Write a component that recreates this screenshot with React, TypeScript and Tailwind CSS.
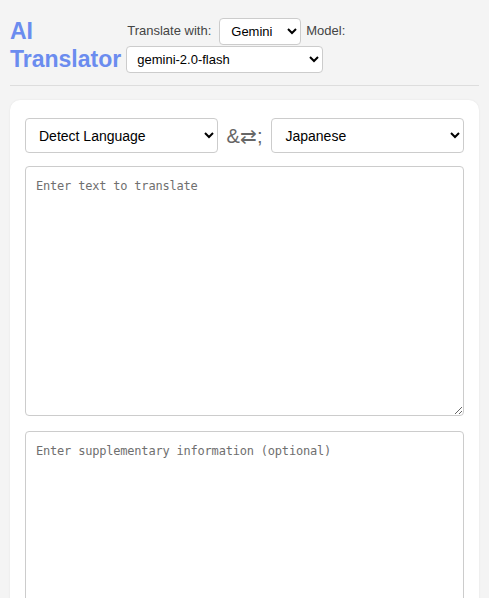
import React from "react";

export default function App() {
  return (
    <div
      className="min-h-[598px] bg-[#f4f4f4] px-[10px] text-[#333]"
      style={{ fontFamily: '"Liberation Sans", Arial, sans-serif' }}
    >
      <header className="flex items-center gap-[5px] border-b border-[#dddddd] pt-[17px] pb-[12px]">
        <h1 className="text-[23px] font-bold leading-[28px] text-[#6b8cef]">
          AI
          <br />
          Translator
        </h1>
        <div className="flex flex-wrap items-center w-[220px] gap-y-[1px]">
          <span className="text-[13px] text-[#444] mr-[8px] ml-[1px]">Translate with:</span>
          <select className="h-[27px] w-[82px] rounded-[4px] border border-[#cccccc] bg-white pl-[7px] text-[13px] text-black">
            <option>Gemini</option>
          </select>
          <span className="text-[13px] text-[#444] ml-[5px]">Model:</span>
          <select className="h-[27px] w-[197px] rounded-[4px] border border-[#cccccc] bg-white pl-[6px] text-[13px] text-black">
            <option>gemini-2.0-flash</option>
          </select>
        </div>
      </header>
      <main className="mt-[14px] rounded-[10px] bg-white px-[15px] pt-[18px] pb-[20px] shadow-[0_0_2px_rgba(0,0,0,0.08)]">
        <div className="flex items-center gap-[9px]">
          <select className="h-[35px] flex-1 rounded-[4px] border border-[#cccccc] bg-white pl-[9px] text-[14px] text-black">
            <option>Detect Language</option>
          </select>
          <span className="text-[20px] text-[#666] leading-none">&amp;⇄;</span>
          <select className="h-[35px] flex-1 rounded-[4px] border border-[#cccccc] bg-white pl-[9px] text-[14px] text-black">
            <option>Japanese</option>
          </select>
        </div>
        <textarea
          className="mt-[13px] block h-[250px] w-full rounded-[4px] border border-[#cccccc] px-[10px] py-[10px] text-[12px] tracking-[-0.2px] placeholder:text-[#6f6f6f]"
          style={{ fontFamily: '"DejaVu Sans Mono", monospace' }}
          placeholder="Enter text to translate"
        />
        <textarea
          className="mt-[15px] block h-[250px] w-full rounded-[4px] border border-[#cccccc] px-[10px] py-[10px] text-[12px] tracking-[-0.2px] placeholder:text-[#6f6f6f]"
          style={{ fontFamily: '"DejaVu Sans Mono", monospace' }}
          placeholder="Enter supplementary information (optional)"
        />
      </main>
    </div>
  );
}
